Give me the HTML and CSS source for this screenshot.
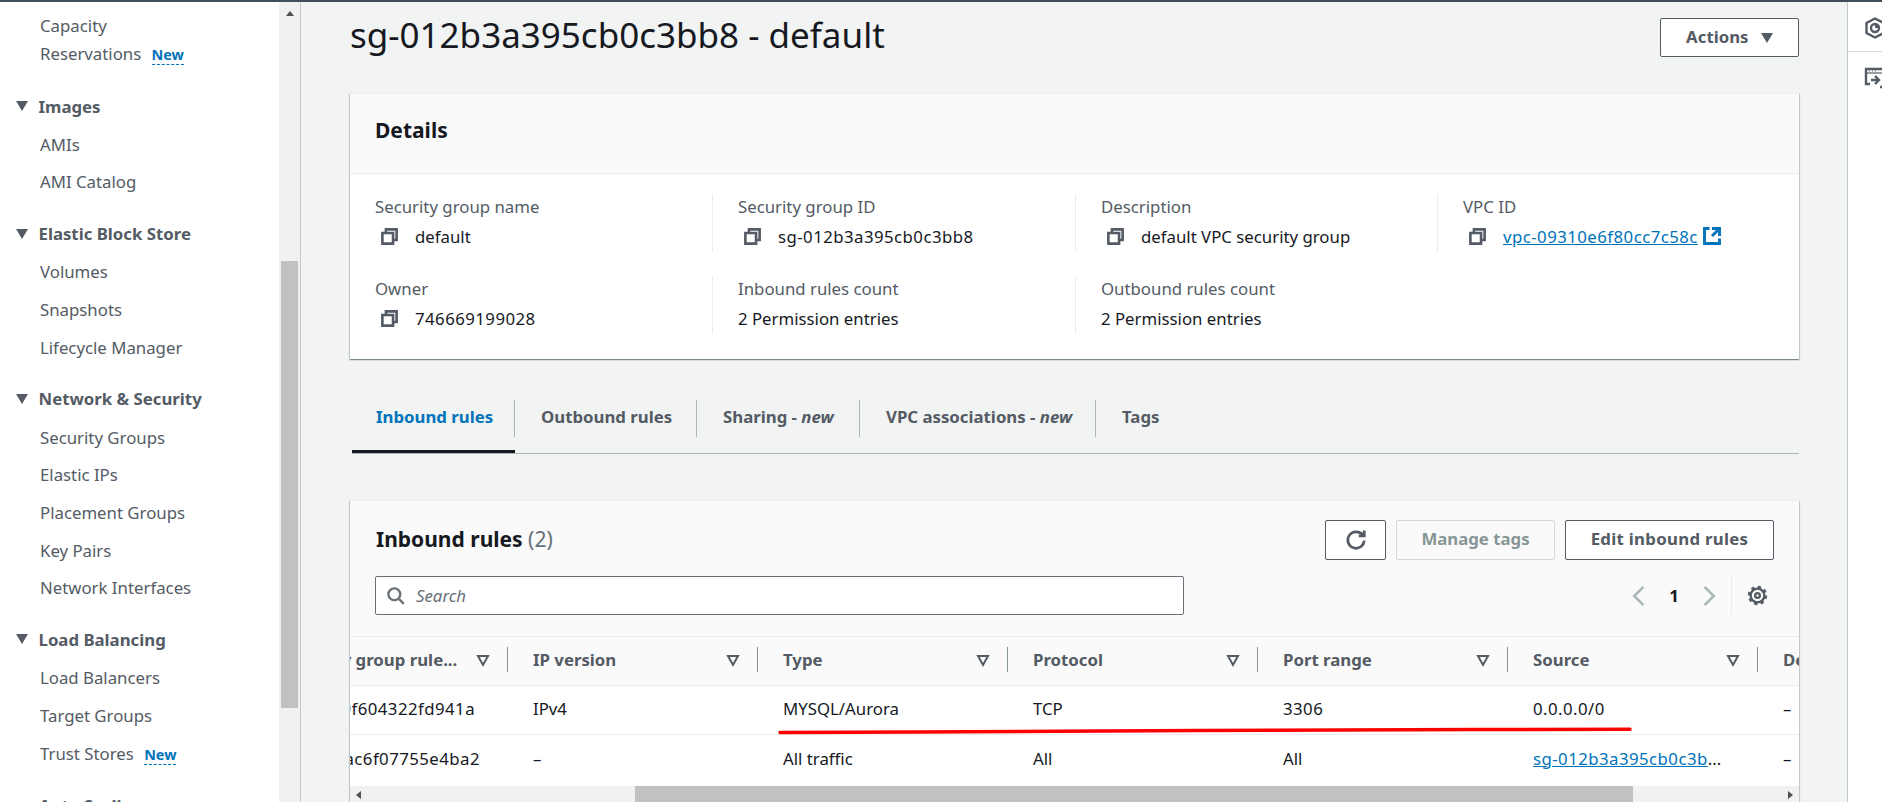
FILE: index.html
```html
<!DOCTYPE html>
<html lang="en">
<head>
    <meta charset="UTF-8">
    <meta name="viewport" content="width=device-width, initial-scale=1.0">
    <title>sg-012b3a395cb0c3bb8 - default</title>
    <link rel="stylesheet" href="styles.css">
</head>
<body>
<svg width="0" height="0" class="defs">
    <symbol id="i-copy" viewBox="0 0 16 16"><path d="M2 5h9v9H2z"/><path d="M5 5V2h9v9h-3"/></symbol>
    <symbol id="i-filter" viewBox="0 0 16 16"><path d="M3 4h10l-5 9z"/></symbol>
</svg>

<div class="page">
    <!-- Side navigation -->
    <nav class="sidebar">
        <ul class="nav-list">
            <li class="nav-item">Capacity<br>Reservations <span class="new-tag">New</span></li>
        </ul>
        <h3 class="nav-head"><span class="caret"></span>Images</h3>
        <ul class="nav-list">
            <li class="nav-item">AMIs</li>
            <li class="nav-item">AMI Catalog</li>
        </ul>
        <h3 class="nav-head"><span class="caret"></span>Elastic Block Store</h3>
        <ul class="nav-list">
            <li class="nav-item">Volumes</li>
            <li class="nav-item">Snapshots</li>
            <li class="nav-item">Lifecycle Manager</li>
        </ul>
        <h3 class="nav-head"><span class="caret"></span>Network &amp; Security</h3>
        <ul class="nav-list">
            <li class="nav-item">Security Groups</li>
            <li class="nav-item">Elastic IPs</li>
            <li class="nav-item">Placement Groups</li>
            <li class="nav-item">Key Pairs</li>
            <li class="nav-item">Network Interfaces</li>
        </ul>
        <h3 class="nav-head"><span class="caret"></span>Load Balancing</h3>
        <ul class="nav-list">
            <li class="nav-item">Load Balancers</li>
            <li class="nav-item">Target Groups</li>
            <li class="nav-item">Trust Stores <span class="new-tag">New</span></li>
        </ul>
        <h3 class="nav-head nav-head-plain">Auto Scaling</h3>
    </nav>
    <div class="side-scroll">
        <span class="arrow-up"></span>
        <div class="side-thumb"></div>
    </div>

    <!-- Main content -->
    <main class="main">
        <div class="title-row">
            <h1>sg-012b3a395cb0c3bb8 - default</h1>
            <button type="button" class="btn btn-actions">Actions <span class="btn-caret"></span></button>
        </div>

        <section class="card">
            <div class="card-head details-head"><h2>Details</h2></div>
            <div class="details-grid">
                <div class="field field-1">
                    <div class="label">Security group name</div>
                    <div class="value"><svg class="icon-copy"><use href="#i-copy"/></svg>default</div>
                </div>
                <div class="field field-2">
                    <div class="label">Security group ID</div>
                    <div class="value"><svg class="icon-copy"><use href="#i-copy"/></svg><span class="id">sg-012b3a395cb0c3bb8</span></div>
                </div>
                <div class="field field-3">
                    <div class="label">Description</div>
                    <div class="value"><svg class="icon-copy"><use href="#i-copy"/></svg>default VPC security group</div>
                </div>
                <div class="field field-4">
                    <div class="label">VPC ID</div>
                    <div class="value"><svg class="icon-copy"><use href="#i-copy"/></svg><a href="#" class="id">vpc-09310e6f80cc7c58c</a>
                        <svg class="icon-ext" viewBox="0 0 16 16"><path d="M14 8V2H8M14 2 8 8M6 2H2v12h12v-4"/></svg>
                    </div>
                </div>
                <div class="field field-1">
                    <div class="label">Owner</div>
                    <div class="value"><svg class="icon-copy"><use href="#i-copy"/></svg><span class="id">746669199028</span></div>
                </div>
                <div class="field field-2">
                    <div class="label">Inbound rules count</div>
                    <div class="value">2 Permission entries</div>
                </div>
                <div class="field field-3 field-end">
                    <div class="label">Outbound rules count</div>
                    <div class="value">2 Permission entries</div>
                </div>
            </div>
        </section>

        <div class="tabs">
            <div class="tab active"><span class="tab-label">Inbound rules</span></div>
            <div class="tab"><span class="tab-label">Outbound rules</span></div>
            <div class="tab"><span class="tab-label">Sharing - <em>new</em></span></div>
            <div class="tab"><span class="tab-label">VPC associations - <em>new</em></span></div>
            <div class="tab"><span class="tab-label no-line">Tags</span></div>
        </div>

        <section class="card rules-card">
            <div class="card-head rules-head">
                <div class="rules-top">
                    <h2>Inbound rules <span class="count">(2)</span></h2>
                    <div class="rules-actions">
                        <button type="button" class="btn btn-refresh" aria-label="Refresh">
                            <svg viewBox="0 0 16 16"><path d="M10 5h4V1"/><path d="M14 8.5A6 6 0 1 1 9.8 2.3c1.700.5 3 1.500 4 2.700"/></svg>
                        </button>
                        <button type="button" class="btn btn-tags" disabled>Manage tags</button>
                        <button type="button" class="btn btn-edit">Edit inbound rules</button>
                    </div>
                </div>
                <div class="rules-tools">
                    <div class="search">
                        <svg viewBox="0 0 16 16"><circle cx="7" cy="7" r="5"/><path d="m11 11 4 4"/></svg>
                        <span>Search</span>
                    </div>
                    <div class="pager">
                        <svg class="chev" viewBox="0 0 16 16"><path d="M11 1 4 8l7 7"/></svg>
                        <span class="page-no">1</span>
                        <svg class="chev" viewBox="0 0 16 16"><path d="m5 1 7 7-7 7"/></svg>
                        <span class="pager-line"></span>
                        <svg class="gear" viewBox="0 0 16 16"><circle cx="8" cy="8" r="5.200"/><circle class="teeth" cx="8" cy="8" r="6.500"/><circle cx="8" cy="8" r="1.800"/></svg>
                    </div>
                </div>
            </div>

            <div class="table-wrap">
                <table class="rules-table">
                    <thead>
                        <tr>
                            <th><div class="th-in"><span class="th-text">Security group rule...</span><svg class="icon-filter"><use href="#i-filter"/></svg></div></th>
                            <th><div class="th-in"><span class="th-text">IP version</span><svg class="icon-filter"><use href="#i-filter"/></svg></div></th>
                            <th><div class="th-in"><span class="th-text">Type</span><svg class="icon-filter"><use href="#i-filter"/></svg></div></th>
                            <th><div class="th-in"><span class="th-text">Protocol</span><svg class="icon-filter"><use href="#i-filter"/></svg></div></th>
                            <th><div class="th-in"><span class="th-text">Port range</span><svg class="icon-filter"><use href="#i-filter"/></svg></div></th>
                            <th><div class="th-in"><span class="th-text">Source</span><svg class="icon-filter"><use href="#i-filter"/></svg></div></th>
                            <th><div class="th-in"><span class="th-text">Description</span></div></th>
                        </tr>
                    </thead>
                    <tbody>
                        <tr>
                            <td class="rule-id"><span class="id">sgr-0c2d9f604322fd941a</span></td>
                            <td>IPv4</td>
                            <td>MYSQL/Aurora</td>
                            <td>TCP</td>
                            <td><span class="id">3306</span></td>
                            <td><span class="id">0.0.0.0/0</span></td>
                            <td>–</td>
                        </tr>
                        <tr>
                            <td class="rule-id rule-id-2"><span class="id">sgr-07b1ac6f07755e4ba2</span></td>
                            <td>–</td>
                            <td>All traffic</td>
                            <td>All</td>
                            <td>All</td>
                            <td><a href="#" class="id">sg-012b3a395cb0c3b</a>...</td>
                            <td>–</td>
                        </tr>
                    </tbody>
                </table>
                <!-- hand drawn annotation over the first row -->
                <svg class="red-mark" viewBox="0 0 860 8"><path d="M3 5.500 140 5 280 4.300 420 3.500 560 3 700 2.500 853 2.200"/></svg>
            </div>
            <div class="table-scroll">
                <span class="arrow-left"></span>
                <div class="table-thumb"></div>
                <span class="arrow-right"></span>
            </div>
        </section>
    </main>

    <!-- Right tool panel -->
    <aside class="tools">
        <div class="tool tool-first">
            <svg viewBox="0 0 24 24"><path d="M12 2.500 20.500 7v10L12 21.500 3.500 17V7z"/><circle cx="12" cy="12" r="4"/><path class="solid" d="M12 8a4 4 0 0 1 4 4h-4z"/></svg>
        </div>
        <div class="tool">
            <svg viewBox="0 0 24 24"><path d="M7 18H3V3h18v11"/><path class="thin" d="M3 7h18"/><path class="thin" d="M6 5h1M9 5h1M12 5h1"/><path d="M8 14h8M12 10l4 4-4 4M17 21h6"/></svg>
        </div>
    </aside>
</div>
</body>
</html>
```

FILE: styles.css
```css
* {
    box-sizing: border-box;
}
html, body {
    margin: 0;
    padding: 0;
    height: 100%;
    overflow: hidden;
}
body {
    font-family: "Noto Sans", Arial, sans-serif;
    font-size: 16.8px;
    color: #16191f;
    background-color: #f2f3f3;
}
h1, h2, h3, ul {
    margin: 0;
    padding: 0;
}
a {
    color: #0073bb;
}
.defs {
    position: absolute;
}
symbol path {
    fill: none;
}
.id {
    letter-spacing: 0.45px;
}

.page {
    display: flex;
    height: 802px;
    border-top: 2px solid #414d5c;
    overflow: hidden;
}

/* sidebar */
.sidebar {
    width: 279px;
    flex: none;
    padding-top: 5px;
    background: #fff;
    color: #545b64;
    overflow: hidden;
}
.nav-list {
    list-style: none;
}
.nav-item {
    padding: 4.85px 0 4.85px 40px;
    line-height: 28px;
}
.nav-head {
    display: flex;
    align-items: center;
    margin-top: 14.5px;
    padding: 0 0 2px 16px;
    height: 37.7px;
    font-size: 16.8px;
    font-weight: 700;
}
.nav-head-plain {
    padding-left: 39px;
}
.caret {
    width: 0;
    height: 0;
    margin-right: 10.5px;
    border-left: 6px solid transparent;
    border-right: 6px solid transparent;
    border-top: 10px solid #545b64;
}
.new-tag {
    margin-left: 6px;
    color: #0073bb;
    font-size: 14.4px;
    font-weight: 700;
    border-bottom: 1px dashed #0073bb;
}
.side-scroll {
    width: 22px;
    flex: none;
    padding: 9px 2px 0;
    background: #f1f1f1;
    border-right: 1px solid #c3c8cc;
}
.arrow-up {
    display: block;
    width: 0;
    height: 0;
    margin: 0 auto;
    border-left: 4.500px solid transparent;
    border-right: 4.500px solid transparent;
    border-bottom: 5px solid #505050;
}
.side-thumb {
    width: 17px;
    height: 447px;
    margin-top: 245px;
    background: #c1c1c1;
}

/* main column */
.main {
    flex: 1;
    min-width: 0;
    padding: 16px 48px 0 49px;
}
.title-row {
    display: flex;
    justify-content: space-between;
    align-items: center;
    margin-bottom: 36px;
}
h1 {
    font-size: 35px;
    font-weight: 400;
    line-height: 39px;
    margin-top: -6px;
}
.btn {
    height: 40px;
    padding: 0 0 3px;
    font-family: inherit;
    font-size: 16.8px;
    font-weight: 700;
    color: #545b64;
    background: #fff;
    border: 1px solid #545b64;
    border-radius: 2px;
}
.btn-actions {
    width: 139px;
    height: 39px;
}
.btn-caret {
    display: inline-block;
    width: 0;
    height: 0;
    margin-left: 8px;
    border-left: 6px solid transparent;
    border-right: 6px solid transparent;
    border-top: 10px solid #545b64;
}
.card {
    background: #fff;
    box-shadow: 0 1px 1px rgba(0, 28, 36, 0.3), 1px 1px 1px rgba(0, 28, 36, 0.15), -1px 1px 1px rgba(0, 28, 36, 0.15);
    border-top: 1px solid #eaeded;
}
.card-head {
    background: #fafafa;
}
.details-head {
    height: 80px;
    padding: 0 0 7px 25px;
    display: flex;
    align-items: center;
    border-bottom: 1px solid #eaeded;
}
h2 {
    font-size: 21px;
    font-weight: 700;
}
.details-grid {
    display: grid;
    grid-template-columns: 338px 363px 362px 1fr;
    row-gap: 24px;
    padding: 20px 0 25px 25px;
}
.field {
    height: 58px;
    padding-left: 25px;
    border-right: 1px solid #eaeded;
}
.field-1 {
    padding-left: 0;
}
.field-4, .field-end {
    border-right: none;
}
.label {
    line-height: 26px;
    color: #545b64;
}
.value {
    display: flex;
    align-items: center;
    height: 32px;
}
.icon-copy {
    width: 19px;
    height: 19px;
    margin: 0 16px 0 5px;
    fill: none;
    stroke: #545b64;
    stroke-width: 2.200;
}
.icon-ext {
    width: 20px;
    height: 20px;
    margin-left: 4px;
    fill: none;
    stroke: #0073bb;
    stroke-width: 2.300;
}

/* tabs */
.tabs {
    display: grid;
    grid-template-columns: 163px 182px 163px 236px 1fr;
    margin: 41px 0 0 2px;
    border-bottom: 1px solid #aab7b8;
    color: #545b64;
    font-weight: 700;
}
.tab {
    padding-bottom: 16px;
}
.tab.active {
    padding-bottom: 13px;
    border-bottom: 3px solid #16191f;
    color: #0073bb;
}
.tab-label {
    display: block;
    height: 37px;
    line-height: 34px;
    padding-left: 26px;
    border-right: 1px solid #aab7b8;
}
.tab.active .tab-label {
    padding-left: 24px;
}
.tab-label.no-line {
    border-right: none;
}

/* inbound rules */
.rules-card {
    position: relative;
    margin-top: 46px;
}
.rules-head {
    padding: 19px 25px 21px 26px;
    border-bottom: 1px solid #eaeded;
}
.rules-top {
    display: flex;
    justify-content: space-between;
    align-items: center;
}
.rules-top h2 {
    margin-top: -2px;
}
.count {
    color: #687078;
    font-weight: 400;
}
.rules-actions {
    display: flex;
    gap: 10px;
}
.btn-refresh {
    width: 61px;
    padding: 0;
    display: flex;
    align-items: center;
    justify-content: center;
}
.btn-refresh svg {
    width: 22px;
    height: 22px;
    fill: none;
    stroke: #545b64;
    stroke-width: 2;
}
.btn-tags {
    width: 159px;
    color: #879596;
    background: transparent;
    border-color: #d5dbdb;
}
.btn-edit {
    width: 209px;
    letter-spacing: 0.3px;
}
.rules-tools {
    display: flex;
    justify-content: space-between;
    align-items: center;
    margin-top: 16px;
}
.search {
    display: flex;
    align-items: center;
    width: 809px;
    height: 39px;
    margin-left: -1px;
    background: #fff;
    border: 1px solid #687078;
    border-radius: 2px;
    color: #687078;
    font-style: italic;
}
.search svg {
    width: 19px;
    height: 19px;
    margin: 0 11px 0 10px;
    fill: none;
    stroke: #687078;
    stroke-width: 2;
}
.pager {
    display: flex;
    align-items: center;
}
.chev {
    width: 21px;
    height: 22px;
    fill: none;
    stroke: #aab7b8;
    stroke-width: 2;
}
.page-no {
    width: 48px;
    text-align: center;
    font-weight: 700;
}
.pager-line {
    width: 1px;
    height: 39px;
    margin: 0 15px 0 12px;
    background: #eaeded;
}
.gear {
    width: 21px;
    height: 21px;
    margin-right: 6px;
    fill: none;
    stroke: #545b64;
    stroke-width: 1.800;
}
.gear .teeth {
    stroke-dasharray: 2.550 2.550;
    stroke-width: 1.800;
}
.table-wrap {
    position: relative;
    height: 149px;
    overflow: hidden;
}
.rules-table {
    width: 1750px;
    margin-left: -92px;
    table-layout: fixed;
    border-collapse: collapse;
}
.rules-table th {
    height: 48px;
    padding: 0 0 3px;
    background: #fafafa;
    border-bottom: 1px solid #eaeded;
    font-weight: 700;
    color: #545b64;
    text-align: left;
}
.th-in {
    display: flex;
    align-items: center;
    justify-content: space-between;
    height: 25px;
    padding: 0 16px 0 25px;
    border-right: 1px solid #879596;
}
.icon-filter {
    width: 16px;
    height: 16px;
    margin-top: 2px;
    fill: none;
    stroke: #545b64;
    stroke-width: 2;
}
.rules-table td {
    padding: 0 0 3px 25px;
    border-bottom: 1px solid #eaeded;
    background: #fff;
    white-space: nowrap;
}
/* the id column is scrolled, only the tail of the id shows */
.rules-table .rule-id {
    padding-left: 0;
    padding-right: 33px;
    text-align: right;
}
.rules-table .rule-id-2 {
    padding-right: 28px;
}
.rules-table tbody tr:first-child td {
    height: 49px;
}
.rules-table tbody tr:last-child td {
    height: 51px;
    border-bottom: none;
}
.red-mark {
    position: absolute;
    left: 427px;
    top: 90px;
    width: 860px;
    height: 8px;
    fill: none;
    stroke: #ff0000;
    stroke-width: 3.500;
    stroke-linecap: round;
}
.table-scroll {
    display: flex;
    align-items: center;
    height: 17px;
    background: #f1f1f1;
    padding: 0 6px;
}
.arrow-left, .arrow-right {
    width: 0;
    height: 0;
    border-top: 4.500px solid transparent;
    border-bottom: 4.500px solid transparent;
}
.arrow-left {
    border-right: 5px solid #505050;
}
.arrow-right {
    border-left: 5px solid #505050;
}
.table-thumb {
    width: 998px;
    height: 17px;
    margin: 0 155px 0 274px;
    background: #c1c1c1;
}

/* right panel */
.tools {
    width: 35px;
    flex: none;
    background: #fff;
    border-left: 1px solid #c3c8cc;
    overflow: hidden;
}
.tool {
    height: 50px;
    padding: 14px 0 0 15px;
}
.tool-first {
    border-bottom: 1px solid #d5dbdb;
}
.tool svg {
    width: 24px;
    height: 24px;
    fill: none;
    stroke: #545b64;
    stroke-width: 2.400;
}
.tool .thin {
    stroke-width: 1.200;
}
.tool .solid {
    fill: #545b64;
    stroke: none;
}
```
